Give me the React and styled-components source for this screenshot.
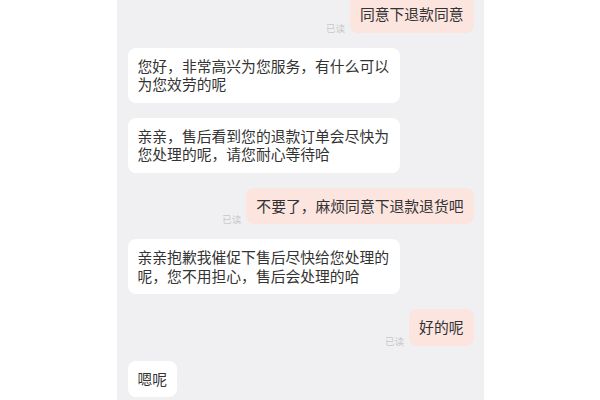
import styled, { createGlobalStyle } from "styled-components";

const GlobalStyle = createGlobalStyle`
  html, body {
    margin: 0;
    padding: 0;
    background: #ffffff;
  }
  body {
    font-family: "Noto Sans CJK SC", "Noto Sans", sans-serif;
  }
`;

const messages = [
  { id: 1, from: "me", text: "同意下退款同意", read: true },
  { id: 2, from: "shop", text: "您好，非常高兴为您服务，有什么可以为您效劳的呢" },
  { id: 3, from: "shop", text: "亲亲，售后看到您的退款订单会尽快为您处理的呢，请您耐心等待哈" },
  { id: 4, from: "me", text: "不要了，麻烦同意下退款退货吧", read: true },
  { id: 5, from: "shop", text: "亲亲抱歉我催促下售后尽快给您处理的呢，您不用担心，售后会处理的哈" },
  { id: 6, from: "me", text: "好的呢", read: true },
  { id: 7, from: "shop", text: "嗯呢" },
];

const App = () => {
  return (
    <>
      <GlobalStyle />
      <Page>
        <ChatPanel>
          <Thread>
            {messages.map((m) => (
              <Row key={m.id} $mine={m.from === "me"}>
                {m.read && <ReadMark>已读</ReadMark>}
                <Bubble $mine={m.from === "me"}>{m.text}</Bubble>
              </Row>
            ))}
          </Thread>
        </ChatPanel>
      </Page>
    </>
  );
};

export default App;

const Page = styled.div`
  width: 600px;
  height: 400px;
  display: flex;
  justify-content: center;
  overflow: hidden;
  background: #ffffff;
`;

const ChatPanel = styled.div`
  width: 367px;
  height: 400px;
  background: #f0f0f2;
  padding: 0 10px 0 11px;
  box-sizing: border-box;
  overflow: hidden;
`;

const Thread = styled.div`
  display: flex;
  flex-direction: column;
  gap: 15px;
  margin-top: -4px;
`;

const Row = styled.div`
  display: flex;
  align-items: flex-end;
  justify-content: ${(p) => (p.$mine ? "flex-end" : "flex-start")};
  gap: 5px;
`;

const Bubble = styled.div`
  max-width: 272px;
  box-sizing: border-box;
  padding: 9px 10px;
  border-radius: 8px;
  background: ${(p) => (p.$mine ? "#fce4df" : "#ffffff")};
  color: #333333;
  font-size: 14.8px;
  line-height: 18.5px;
  word-break: break-all;
`;

const ReadMark = styled.span`
  font-size: 9.5px;
  line-height: 12px;
  color: #c8c8ca;
  margin-bottom: -1px;
`;
